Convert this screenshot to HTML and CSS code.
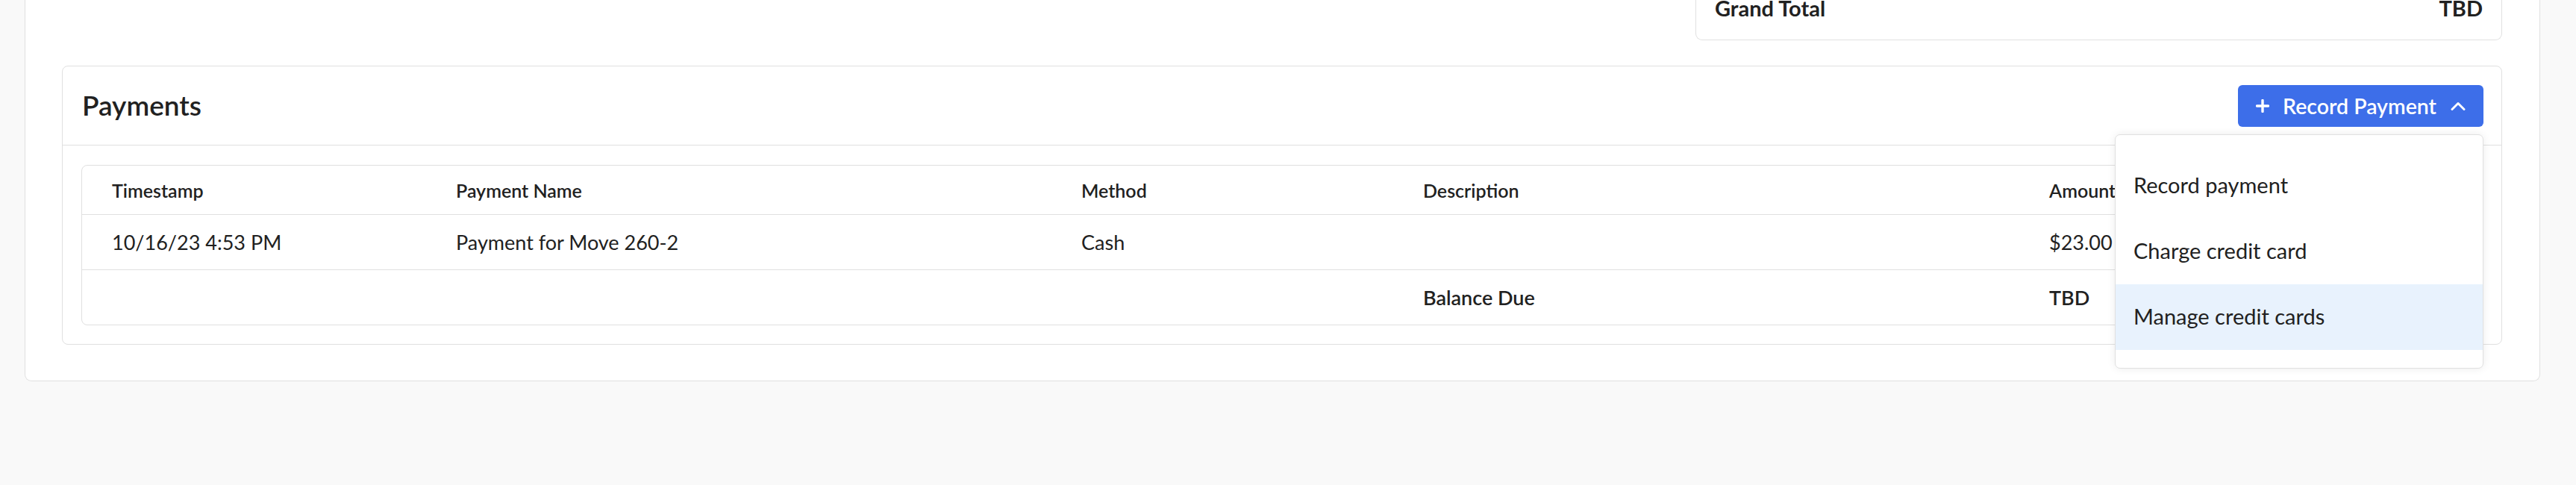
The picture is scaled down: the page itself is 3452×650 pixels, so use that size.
FILE: index.html
```html
<!DOCTYPE html>
<html>
<head>
    <link rel="stylesheet" href="styles.css">
</head>
<body>
    <div class="page">
        <div class="totals-card">
            <div class="totals-row">
                <span>Grand Total</span>
                <span>TBD</span>
            </div>
        </div>

        <div class="payments-card">
            <div class="payments-header">
                <h2>Payments</h2>
                <div class="dropdown">
                    <button class="record-btn">
                        <svg class="btn-icon" width="18" height="18" viewBox="0 0 18 18">
                            <path d="M9 1.5v15M1.5 9h15" stroke="#fff" stroke-width="3.4" stroke-linecap="round" fill="none"/>
                        </svg>
                        <span>Record Payment</span>
                        <svg class="btn-chevron" width="20" height="12" viewBox="0 0 20 12">
                            <path d="M2 10.5l8-8 8 8" stroke="#fff" stroke-width="3" stroke-linecap="round" stroke-linejoin="round" fill="none"/>
                        </svg>
                    </button>
                    <div class="dropdown-menu">
                        <div class="dropdown-item">Record payment</div>
                        <div class="dropdown-item">Charge credit card</div>
                        <div class="dropdown-item active">Manage credit cards</div>
                    </div>
                </div>
            </div>

            <div class="payments-body">
                <div class="table-card">
                    <table class="payments-table">
                        <colgroup>
                            <col style="width: 461px">
                            <col style="width: 838px">
                            <col style="width: 458px">
                            <col style="width: 839px">
                            <col>
                        </colgroup>
                        <thead>
                            <tr>
                                <th>Timestamp</th>
                                <th>Payment Name</th>
                                <th>Method</th>
                                <th>Description</th>
                                <th>Amount</th>
                            </tr>
                        </thead>
                        <tbody>
                            <tr>
                                <td>10/16/23 4:53 PM</td>
                                <td>Payment for Move 260-2</td>
                                <td>Cash</td>
                                <td></td>
                                <td>$23.00</td>
                            </tr>
                            <tr class="balance-row">
                                <td></td>
                                <td></td>
                                <td></td>
                                <td>Balance Due</td>
                                <td>TBD</td>
                            </tr>
                        </tbody>
                    </table>
                </div>
            </div>
        </div>
    </div>
</body>
</html>
```

FILE: styles.css
```css
body {
    margin: 0;
    background-color: #f9f9f9;
    font-family: "Lato", "Open Sans", sans-serif;
    color: #212121;
}

.page {
    margin: 0 48px 0 33px;
    padding: 0 50px 48px 49px;
    background: #fff;
    border: 1px solid #e0e0e0;
    border-top: none;
    border-radius: 0 0 9px 9px;
}

.totals-card {
    width: 1081px;
    margin-left: auto;
    padding: 0 25px 32px 25px;
    border: 1px solid #e0e0e0;
    border-top: none;
    border-radius: 0 0 9px 9px;
    box-sizing: border-box;
}

.totals-row {
    display: flex;
    justify-content: space-between;
    font-size: 29px;
    font-weight: 700;
    line-height: 21px;
}

.payments-card {
    margin-top: 34px;
    border: 1px solid #e0e0e0;
    border-radius: 8px;
}

.payments-header {
    display: flex;
    justify-content: space-between;
    align-items: center;
    padding: 25px 24px 24px 26px;
    border-bottom: 1px solid #e0e0e0;
}

.payments-header h2 {
    margin: 0 0 4px 0;
    font-size: 37px;
    font-weight: 600;
}

.dropdown {
    position: relative;
}

.record-btn {
    display: flex;
    align-items: center;
    height: 56px;
    padding: 0 24px;
    border: none;
    border-radius: 6px;
    background-color: #3d6ee9;
    color: #fff;
    font-family: inherit;
    font-size: 28.5px;
    font-weight: 600;
    cursor: pointer;
}

.btn-icon {
    margin-right: 18px;
}

.btn-chevron {
    margin-left: 19px;
}

.dropdown-menu {
    position: absolute;
    top: calc(100% + 10px);
    right: 0;
    width: 494px;
    padding: 24px 0;
    background: #fff;
    border: 1px solid #e0e0e0;
    border-radius: 7px;
    box-shadow: 0 0 12px rgba(0, 0, 0, 0.08);
    box-sizing: border-box;
    z-index: 10;
}

.dropdown-item {
    height: 88px;
    padding: 0 0 3px 24px;
    box-sizing: border-box;
    display: flex;
    align-items: center;
    font-size: 29px;
}

.dropdown-item.active {
    background-color: #e8f2fd;
}

.payments-body {
    padding: 26px 25px 25px 25px;
}

.table-card {
    border: 1px solid #e0e0e0;
    border-radius: 8px;
    overflow: hidden;
}

.payments-table {
    width: 100%;
    table-layout: fixed;
    border-collapse: separate;
    border-spacing: 0;
}

.payments-table th,
.payments-table td {
    text-align: left;
    padding: 0 0 0 40px;
    border-bottom: 1px solid #e0e0e0;
    white-space: nowrap;
}

.payments-table th {
    height: 65px;
    font-size: 25px;
    font-weight: 600;
}

.payments-table td {
    height: 73px;
    font-size: 27px;
}

.payments-table tr:last-child td {
    border-bottom: none;
}

.balance-row td {
    font-weight: 600;
}
```
